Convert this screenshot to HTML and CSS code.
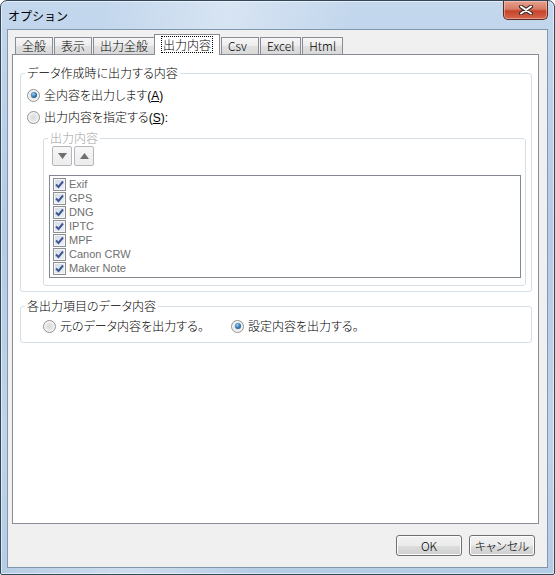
FILE: index.html
```html
<!DOCTYPE html>
<html lang="ja">
<head>
    <meta charset="UTF-8">
    <meta name="viewport" content="width=device-width, initial-scale=1.0">
    <title>オプション</title>

    <link rel="stylesheet" href="styles.css">
</head>
<body>
    <div class = "window_main">
        <div class = "bar_title">
            <span class = "text_title">オプション</span>
            <button class = "btn_close" title = "閉じる">
                <svg width = "14" height = "10" viewBox = "0 0 14 10">
                    <path d = "M2 1.5 L12 8.5 M12 1.5 L2 8.5" stroke = "#3b2a28" stroke-width = "4" stroke-linecap = "round"/>
                    <path d = "M2 1.5 L12 8.5 M12 1.5 L2 8.5" stroke = "#ffffff" stroke-width = "2" stroke-linecap = "round"/>
                </svg>
            </button>
        </div>

        <div class = "area_client">
            <div class = "strip_tabs">
                <div class = "tab">全般</div>
                <div class = "tab">表示</div>
                <div class = "tab">出力全般</div>
                <div class = "tab tab_active"><span class = "ring_focus">出力内容</span></div>
                <div class = "tab">Csv</div>
                <div class = "tab">Excel</div>
                <div class = "tab">Html</div>
            </div>

            <div class = "panel_tab">
                <fieldset class = "group group_output">
                    <legend>データ作成時に出力する内容</legend>
                    <label class = "row_radio"><span class = "radio radio_checked"></span><span>全内容を出力します<span class = "key_access">(<u>A</u>)</span></span></label>
                    <label class = "row_radio"><span class = "radio"></span><span>出力内容を指定する<span class = "key_access">(<u>S</u>):</span></span></label>

                    <fieldset class = "group group_inner">
                        <legend>出力内容</legend>
                        <div class = "box_order">
                            <button class = "btn_order">
                                <svg width = "9" height = "6" viewBox = "0 0 9 6"><polygon points = "0,0 9,0 4.5,6" fill = "#6f6f6f"/></svg>
                            </button>
                            <button class = "btn_order">
                                <svg width = "9" height = "6" viewBox = "0 0 9 6"><polygon points = "0,6 9,6 4.5,0" fill = "#6f6f6f"/></svg>
                            </button>
                        </div>
                        <ul class = "list_items" id = "list_items"></ul>
                    </fieldset>
                </fieldset>

                <fieldset class = "group group_value">
                    <legend>各出力項目のデータ内容</legend>
                    <div class = "line_radio">
                        <label class = "row_radio row_first"><span class = "radio"></span>元のデータ内容を出力する。</label>
                        <label class = "row_radio"><span class = "radio radio_checked"></span>設定内容を出力する。</label>
                    </div>
                </fieldset>
            </div>

            <div class = "box_footer">
                <button class = "btn_dialog">OK</button>
                <button class = "btn_dialog">キャンセル</button>
            </div>
        </div>
    </div>

    <script>
        document.addEventListener('DOMContentLoaded', function() {
            const items = ['Exif', 'GPS', 'DNG', 'IPTC', 'MPF', 'Canon CRW', 'Maker Note'];
            let html = '';

            items.forEach(item => {
                html += `<li class="item_list">
                    <span class="check">
                        <svg width="9" height="9" viewBox="0 0 9 9"><path d="M1 4.5 L3.5 7 L8 1.5" stroke="#3f5892" stroke-width="2" fill="none"/></svg>
                    </span><span class="text_item">${item}</span></li>`;
            });

            document.getElementById('list_items').innerHTML = html;
        });
    </script>
</body>
</html>
```

FILE: styles.css
```css
body 
{
    margin: 0;
    padding: 0;
    background-color: #ffffff;
    font-family: "Noto Sans CJK JP", "Noto Sans", sans-serif;
    font-size: 12px;
    font-weight: 300;
    color: #000;
    text-autospace: no-autospace;
}

.window_main 
{
    width: 555px;
    height: 575px;
    box-sizing: border-box;
    display: flex;
    flex-direction: column;
    padding: 0 6px 6px 6px;
    border: 1px solid #34465a;
    border-radius: 7px 7px 2px 2px;
    background: linear-gradient(100deg, rgba(255,255,255,0) 15%, rgba(255,255,255,0.35) 35%, rgba(255,255,255,0) 55%),
                linear-gradient(180deg, #c3d7ed 0%, #b3cbe5 40%, #bfd4ea 75%, #b5cce5 100%);
    box-shadow: inset 0 0 0 1px rgba(255,255,255,0.55);
}

.bar_title 
{
    height: 28px;
    display: flex;
    justify-content: space-between;
    align-items: flex-start;
}

.text_title 
{
    margin: 8px 0 0 1px;
    line-height: 14px;
    font-size: 12px;
    font-weight: 400;
}

.btn_close 
{
    width: 45px;
    height: 19px;
    padding: 0;
    display: flex;
    align-items: center;
    justify-content: center;
    border: 1px solid #5b2a22;
    border-top: none;
    border-radius: 0 0 5px 5px;
    background: linear-gradient(180deg, #e6a18f 0%, #d77c66 45%, #c8442a 55%, #d3664d 100%);
    box-shadow: inset 0 0 0 1px rgba(255,220,210,0.45);
}

.area_client 
{
    flex: 1;
    display: flex;
    flex-direction: column;
    padding: 4px 8px 11px 4px;
    background-color: #f0f0f0;
    border: 1px solid #8097ae;
}

.strip_tabs 
{
    height: 20px;
    display: flex;
    align-items: flex-end;
    padding-left: 3px;
}

.tab 
{
    height: 17px;
    min-width: 38px;
    box-sizing: border-box;
    padding: 0 6px;
    margin-right: 1px;
    line-height: 15px;
    border: 1px solid #898c95;
    border-bottom: none;
    background: linear-gradient(180deg, #f6f6f6 0%, #ececec 50%, #e0e0e0 51%, #d9d9d9 100%);
    font-feature-settings: "palt";
}

.tab_active 
{
    position: relative;
    z-index: 1;
    height: 21px;
    margin: 0 1px -1px -2px;
    padding: 1px 7px 0 7px;
    line-height: 17px;
    background: #ffffff;
}

.ring_focus 
{
    display: inline-block;
    padding: 0 1px;
    line-height: 15px;
    outline: 1px dotted #000;
}

.panel_tab 
{
    flex: 1;
    padding: 11px 6px 0 7px;
    background-color: #ffffff;
    border: 1px solid #898c95;
}

.group 
{
    margin: 0;
    padding: 7px 5px 5px 6px;
    border: 1px solid #d5dfe5;
    border-radius: 3px;
    min-width: 0;
}

.group legend 
{
    padding: 0 2px;
    margin-left: -2px;
    line-height: 14px;
    font-feature-settings: "palt";
}

.group_inner 
{
    margin: 6px 0 0 16px;
    padding: 1px 4px 7px 5px;
}

.group_inner legend 
{
    margin-left: -1px;
    color: #a2a2a2;
}

.group_value 
{
    margin-top: 7px;
    padding: 5px 5px 8px 6px;
}

.row_radio 
{
    height: 16px;
    display: flex;
    align-items: center;
    gap: 4px;
    line-height: 16px;
    font-feature-settings: "palt";
}

.key_access 
{
    font-family: "Liberation Sans", sans-serif;
    font-feature-settings: normal;
}

.key_access u 
{
    text-underline-offset: 1px;
}

.row_radio + .row_radio 
{
    margin-top: 6px;
}

.line_radio 
{
    display: flex;
    margin-left: 16px;
}

.line_radio .row_radio + .row_radio 
{
    margin-top: 0;
}

.row_first 
{
    width: 188px;
}

.radio 
{
    width: 13px;
    height: 13px;
    box-sizing: border-box;
    display: flex;
    align-items: center;
    justify-content: center;
    border: 1px solid #929292;
    border-radius: 50%;
    background: radial-gradient(circle at 50% 50%, #d9d9d9 0%, #e8e8e8 45%, #fbfbfb 100%);
    box-shadow: inset 0 0 0 1px #f6f6f6;
    flex-shrink: 0;
}

.radio_checked::after 
{
    content: "";
    width: 6px;
    height: 6px;
    border-radius: 50%;
    background: radial-gradient(circle at 40% 35%, #9fd2f6 0%, #3d7fb8 45%, #123f6c 100%);
}

.box_order 
{
    display: flex;
    gap: 2px;
    margin-left: 3px;
}

.btn_order 
{
    width: 20px;
    height: 20px;
    padding: 0;
    display: flex;
    align-items: center;
    justify-content: center;
    border: 1px solid #b3b7bb;
    border-radius: 2px;
    background: linear-gradient(180deg, #f7f7f7 0%, #ececec 100%);
}

.list_items 
{
    list-style: none;
    margin: 9px 0 0 0;
    padding: 1px 0 2px 3px;
    border: 1px solid #828790;
    background-color: #ffffff;
}

.item_list 
{
    height: 14px;
    display: flex;
    align-items: center;
    gap: 3px;
    color: #707070;
}

.text_item 
{
    font-family: "Liberation Sans", sans-serif;
    font-size: 11px;
    font-weight: 400;
    line-height: 13px;
}

.check 
{
    width: 13px;
    height: 13px;
    box-sizing: border-box;
    display: flex;
    align-items: center;
    justify-content: center;
    border: 1px solid #8e8f8f;
    background: linear-gradient(135deg, #d4dbe6 0%, #eef1f6 100%);
    box-shadow: inset 0 0 0 1px #f4f6f9;
    flex-shrink: 0;
}

.box_footer 
{
    display: flex;
    justify-content: flex-end;
    gap: 7px;
    margin-top: 11px;
    padding-right: 4px;
}

.btn_dialog 
{
    width: 66px;
    height: 21px;
    padding: 0;
    font-family: inherit;
    font-size: 12px;
    font-weight: 300;
    line-height: 17px;
    color: #000;
    border: 1px solid #707070;
    border-radius: 3px;
    background: linear-gradient(180deg, #f2f2f2 0%, #ebebeb 50%, #dddddd 51%, #cfcfcf 100%);
    box-shadow: inset 0 0 0 1px #fcfcfc;
    font-feature-settings: "palt";
}
```
